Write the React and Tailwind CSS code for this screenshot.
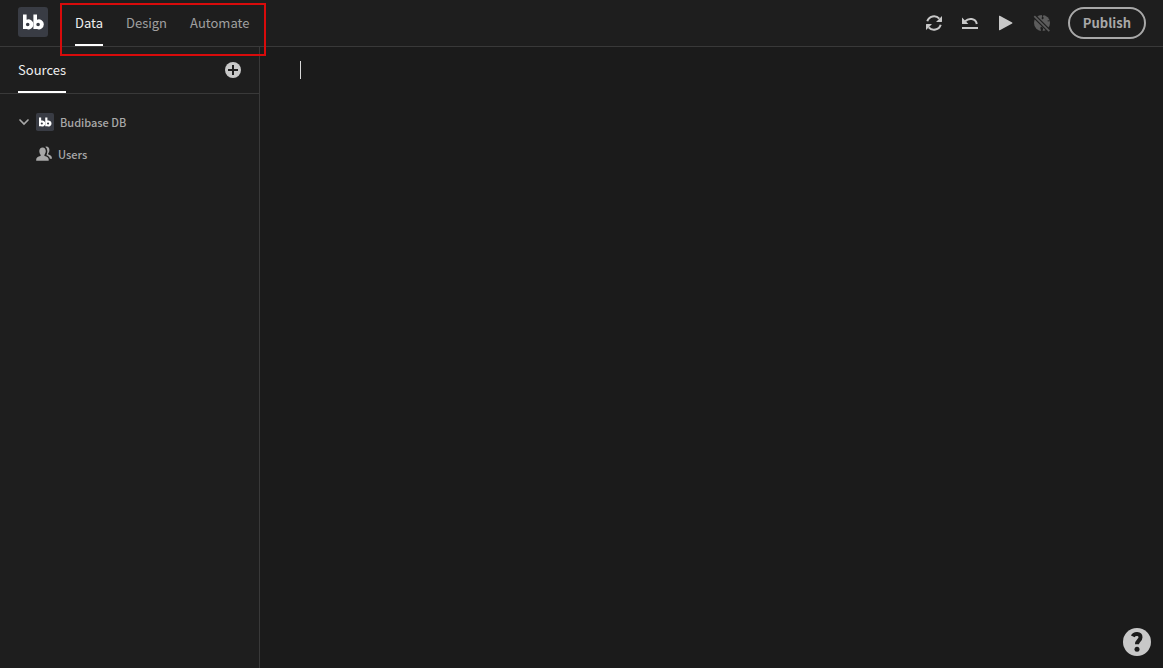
import React from 'react';

const Logo = ({ className }) => (
  <svg viewBox="0 0 30 30" className={className} aria-hidden="true">
    <rect width="30" height="30" rx="3" fill="#393c44" />
    <g fill="#fff" fillRule="evenodd">
      <path d="M5 7.5h3.6v5.2a5 5 0 1 1 0 9.3H5zM9.7 15.7a1.8 1.8 0 1 0 0 3.6a1.8 1.8 0 0 0 0-3.6z" />
      <path d="M15.4 7.5H19v5.2a5 5 0 1 1 0 9.3h-3.6zM20.1 15.7a1.8 1.8 0 1 0 0 3.6a1.8 1.8 0 0 0 0-3.6z" />
    </g>
  </svg>
);

const RefreshIcon = () => (
  <svg viewBox="0 0 18 18" className="size-[18px]">
    <g fill="none" stroke="currentColor" strokeWidth="2">
      <path d="M2.3 7.3A7 7 0 0 1 14.3 4.7" />
      <path d="M15.7 10.7A7 7 0 0 1 3.7 13.3" />
    </g>
    <path fill="currentColor" d="M17 2v5.6a.4.4 0 0 1-.4.4H11zM1 16v-5.6a.4.4 0 0 1 .4-.4H7z" />
  </svg>
);

const RevertIcon = () => (
  <svg viewBox="0 0 18 18" className="size-[18px]">
    <path fill="none" stroke="currentColor" strokeWidth="2" d="M4.2 7.2C7.5 3.8 14.6 4 15.8 10" />
    <path fill="currentColor" d="M1 3.6v5.9a.5.5 0 0 0 .5.5h5.9zM1 13h16v2H1z" />
  </svg>
);

const PlayIcon = () => (
  <svg viewBox="0 0 18 18" className="size-[18px]">
    <path fill="currentColor" d="M2 2.2v13.6a.5.5 0 0 0 .8.4l12.4-6.8a.5.5 0 0 0 0-.8L2.8 1.8a.5.5 0 0 0-.8.4z" />
  </svg>
);

const GlobeStrikeIcon = () => (
  <svg viewBox="0 0 18 18" className="size-[18px]">
    <circle cx="9" cy="9" r="8" fill="currentColor" />
    <path fill="#1e1e1e" d="M8.8 1h1.6l-.5 1.800 1 1.200-1.300 1.500-1.100-1.300.8-1.600zM16.500 6.200l-2 .2.300 1 2.100-.3zM8 12.500l2.200 1.500-.6 3H8.200l-.9-3z" />
    <path fill="none" stroke="#1e1e1e" strokeWidth="4" d="M0 .8l17.500 17.500" />
    <path fill="none" stroke="currentColor" strokeWidth="1.700" d="M1.300 2.100l15 15" />
  </svg>
);

const AddCircleIcon = () => (
  <svg viewBox="0 0 18 18" className="size-[18px]">
    <circle cx="9" cy="9" r="8" fill="currentColor" />
    <path stroke="#1e1e1e" strokeWidth="2" d="M9 4v10M4 9h10" />
  </svg>
);

const UsersIcon = () => (
  <svg viewBox="0 0 16 16" className="size-4">
    <g fill="currentColor">
      <path d="M6.6 1.4c2 0 3.2 1.5 3.2 3.7 0 1.5-.6 2.9-1.3 3.7-.3.4-.2 1 .2 1.2 2.3.7 4 1.7 4 3.6v1.2H.2v-1.2c0-1.9 1.8-2.9 4.1-3.6.5-.2.6-.8.2-1.2-.7-.8-1.2-2.2-1.2-3.7 0-2.2 1.2-3.7 3.3-3.7z" />
      <path d="M9.3.9c.3-.2.7-.3 1.1-.3 1.9 0 3 1.5 3 3.5 0 1.4-.5 2.6-1.2 3.4-.3.4-.2.9.2 1.1 2 .7 3.5 1.7 3.5 3.5v.7h-2c-.3-1.8-1.7-2.9-3.7-3.7.7-1 1-2.4 1-4 0-1.8-.7-3.3-1.9-4.2z" />
    </g>
    <path fill="none" stroke="#1e1e1e" strokeWidth=".7" d="M9.5 1.5c1.6 2 1.6 5.2.2 7.6" />
  </svg>
);

const HelpIcon = () => (
  <svg viewBox="0 0 28 28" className="size-7">
    <circle cx="14" cy="14" r="14" fill="currentColor" />
    <path fill="none" stroke="#1b1b1b" strokeWidth="4" d="M9.8 8.4C11.2 5.3 17.5 5 17.5 9.3c0 3.3-3.5 3.2-3.5 7" />
    <circle cx="14" cy="21.3" r="2.5" fill="#1b1b1b" />
  </svg>
);

const tabs = ['Data', 'Design', 'Automate'];

const actions = [
  { label: 'Refresh', icon: RefreshIcon },
  { label: 'Revert', icon: RevertIcon },
  { label: 'Preview', icon: PlayIcon },
  { label: 'Unpublish', icon: GlobeStrikeIcon, disabled: true },
];

const TopBar = () => (
  <header className="flex h-[47px] shrink-0 items-stretch justify-between border-b border-[#393939] bg-[#1e1e1e] pl-[18px] pr-[17px]">
    <div className="flex gap-[27px]">
      <a href="#home" aria-label="Home" className="mt-[7px]">
        <Logo className="size-[30px]" />
      </a>
      <nav className="relative flex gap-[23px]">
        {tabs.map((tab, i) => (
          <a
            key={tab}
            href={`#${tab.toLowerCase()}`}
            className={`flex items-center border-b-2 pt-0.5 text-[13px] leading-5 ${i === 0 ? 'border-white text-[#efefef]' : 'border-transparent text-[#a0a0a0]'}`}
          >
            {tab}
          </a>
        ))}
        <div className="pointer-events-none absolute -left-[15px] -right-[17px] top-[3px] h-[53px] border-2 border-[#d80b0b]" />
      </nav>
    </div>
    <div className="flex items-center gap-[17px]">
      <div className="flex gap-[18px]">
        {actions.map(({ label, icon: Icon, disabled }) => (
          <button key={label} aria-label={label} disabled={disabled} className={disabled ? 'text-[#5c5c5c]' : 'text-[#c8c8c8]'}>
            <Icon />
          </button>
        ))}
      </div>
      <button className="h-8 rounded-full border-2 border-[#a8a8a8] px-[13px] text-[13px] font-bold leading-5 text-[#a8a8a8]">
        Publish
      </button>
    </div>
  </header>
);

const Sidebar = () => (
  <aside className="w-[260px] shrink-0 border-r border-[#393939] bg-[#1e1e1e]">
    <div className="flex h-[47px] justify-between border-b border-[#393939] pl-[18px] pr-[17px]">
      <h2 className="flex items-center border-b-2 border-white pt-0.5 text-[13px] leading-5 text-[#efefef]">Sources</h2>
      <button aria-label="Add source" className="text-[#c8c8c8]">
        <AddCircleIcon />
      </button>
    </div>
    <ul className="pt-3 text-[11px] font-medium leading-4 text-[#a8a8a8]">
      <li>
        <button className="flex h-8 w-full items-center pl-[18px]">
          <svg viewBox="0 0 12 12" className="size-3" fill="none" stroke="currentColor" strokeWidth="1.7" strokeLinecap="round">
            <path d="M2 4l4 4 4-4" />
          </svg>
          <Logo className="mx-1.5 size-[18px]" />
          Budibase DB
        </button>
      </li>
      <li>
        <a href="#users" className="flex h-8 items-center gap-1.5 pl-9">
          <UsersIcon />
          Users
        </a>
      </li>
    </ul>
  </aside>
);

export default function App() {
  return (
    <div className="flex min-h-screen flex-col bg-[#1b1b1b] font-['Noto_Sans_CJK_JP',sans-serif]">
      <TopBar />
      <div className="flex flex-1">
        <Sidebar />
        <main className="flex-1 px-10 py-3.5">
          <div className="h-[18px] w-px bg-[#d8d8d8]" />
        </main>
      </div>
      <button aria-label="Help" className="fixed bottom-3 right-3 text-[#c8c8c8]">
        <HelpIcon />
      </button>
    </div>
  );
}
